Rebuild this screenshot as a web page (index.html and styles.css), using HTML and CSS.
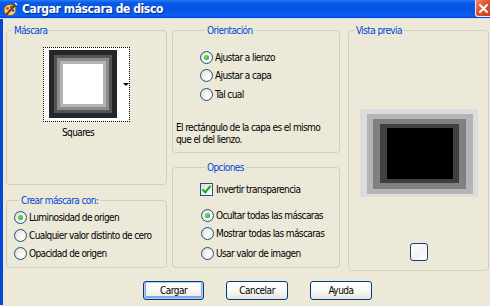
FILE: index.html
```html
<!DOCTYPE html>
<html lang="es">
<head>
  <meta charset="UTF-8" />
  <title>Cargar máscara de disco</title>
  <link rel="stylesheet" href="styles.css">
</head>
<body>
  <div class="window">
    <div class="titlebar">
      <svg class="app-icon" width="15" height="15" viewBox="0 0 15 15">
        <ellipse cx="7" cy="8" rx="6" ry="5.5" fill="#f4d38a" stroke="#9a5a1a" stroke-width="1"/>
        <circle cx="4.5" cy="6.5" r="1.4" fill="#e23b1c"/>
        <circle cx="8" cy="5" r="1.3" fill="#2a9a2a"/>
        <circle cx="10" cy="8.5" r="1.3" fill="#2050d0"/>
        <path d="M3 13 L13 2" stroke="#7a3a0a" stroke-width="2"/>
        <path d="M12 1 L14 3" stroke="#ffffff" stroke-width="1.5"/>
      </svg>
      <span class="title">Cargar máscara de disco</span>
      <span class="close">
        <svg width="11" height="11" viewBox="0 0 11 11">
          <path d="M2 2 L9 9 M9 2 L2 9" stroke="#fff" stroke-width="2" stroke-linecap="round"/>
        </svg>
      </span>
    </div>

    <div class="client">
      <div class="columns">
        <div class="col col-left">
          <fieldset class="group group-mask">
            <legend>Máscara</legend>
            <div class="swatch">
              <div class="mask-thumb"></div>
              <span class="drop-arrow"></span>
            </div>
            <div class="swatch-name">Squares</div>
          </fieldset>

          <fieldset class="group group-create">
            <legend>Crear máscara con:</legend>
            <label class="opt"><span class="radio checked"></span>Luminosidad de origen</label>
            <label class="opt"><span class="radio"></span>Cualquier valor distinto de cero</label>
            <label class="opt"><span class="radio"></span>Opacidad de origen</label>
          </fieldset>
        </div>

        <div class="col col-mid">
          <fieldset class="group group-orient">
            <legend>Orientación</legend>
            <div class="opt-list">
              <label class="opt"><span class="radio checked"></span>Ajustar a lienzo</label>
              <label class="opt"><span class="radio"></span>Ajustar a capa</label>
              <label class="opt"><span class="radio"></span>Tal cual</label>
            </div>
            <p class="note">El rectángulo de la capa es el mismo<br>que el del lienzo.</p>
          </fieldset>

          <fieldset class="group group-options">
            <legend>Opciones</legend>
            <label class="opt"><span class="check"></span>Invertir transparencia</label>
            <div class="opt-list spaced">
              <label class="opt"><span class="radio checked"></span>Ocultar todas las máscaras</label>
              <label class="opt"><span class="radio"></span>Mostrar todas las máscaras</label>
              <label class="opt last"><span class="radio"></span>Usar valor de imagen</label>
            </div>
          </fieldset>
        </div>

        <fieldset class="group group-preview">
          <legend>Vista previa</legend>
          <div class="pv pv1"><div class="pv pv2"><div class="pv pv3"><div class="pv pv4"><div class="pv pv5"></div></div></div></div></div>
          <button class="mini-btn" type="button"></button>
        </fieldset>
      </div>

      <div class="buttons">
        <button class="btn default" type="button">Cargar</button>
        <button class="btn" type="button">Cancelar</button>
        <button class="btn" type="button">Ayuda</button>
      </div>
    </div>
  </div>
</body>
</html>
```

FILE: styles.css
```css
/* Base */
* {
  box-sizing: border-box;
}
body {
  margin: 0;
  width: 490px;
  height: 306px;
  overflow: hidden;
  background: #ece9d8;
  font-family: 'DejaVu Sans Condensed', 'DejaVu Sans', sans-serif;
  font-size: 10px;
  letter-spacing: -0.6px;
  color: #000;
}

.window {
  width: 490px;
  height: 306px;
}

/* Title bar */
.titlebar {
  height: 19px;
  display: flex;
  align-items: flex-start;
  background: linear-gradient(#2a7cf6 0%, #0a5ae8 15%, #0454e6 55%, #0a60f0 85%, #0046d8 100%);
  border-bottom: 1px solid #cfd8f0;
}
.app-icon {
  margin: 2px 0 0 3px;
}
.title {
  margin: 2px 0 0 4px;
  color: #fff;
  font-weight: 700;
  font-size: 12px;
  line-height: 15px;
  letter-spacing: -0.4px;
  text-shadow: 1px 1px 0 #0a2a8a;
}
.close {
  margin-left: auto;
  width: 15px;
  height: 17px;
  display: flex;
  align-items: center;
  justify-content: center;
  padding-left: 1px;
  background: linear-gradient(135deg, #f08a6a 0%, #e0542c 45%, #c83c18 100%);
  border: 1px solid #f4e8e0;
  border-right: none;
  border-top: none;
  border-radius: 0 0 0 3px;
}

/* Client area */
.client {
  height: 286px;
  border-left: 3px solid #0846d8;
  padding: 5px 0 0 3px;
}

.columns {
  display: flex;
  align-items: flex-start;
}
.col {
  display: flex;
  flex-direction: column;
}
.col-left {
  width: 161px;
  gap: 9px;
}
.col-mid {
  width: 168px;
  margin-left: 5px;
  gap: 8px;
}

/* Group boxes */
.group {
  margin: 0;
  padding: 0;
  min-width: 0;
  border: 1px solid #d0d0bf;
  border-radius: 4px;
}
.group legend {
  margin-left: 5px;
  padding: 0 2px;
  line-height: 13px;
  color: #0046d5;
}

.group-mask {
  height: 161px;
  display: flex;
  flex-direction: column;
  padding-top: 10px;
}
.swatch {
  align-self: center;
  width: 87px;
  height: 75px;
  border: 1px dotted #000;
  background: #fff;
  display: flex;
  align-items: flex-start;
  padding: 2px 0 0 5px;
}
.mask-thumb {
  width: 68px;
  height: 68px;
  background: #fff;
  box-shadow:
    inset 0 0 0 5px #262626,
    inset 0 0 0 8px #545454,
    inset 0 0 0 11px #8c8c8c,
    inset 0 0 0 14px #b4b4b4;
}
.drop-arrow {
  margin: 33px 0 0 6px;
  border-left: 3px solid transparent;
  border-right: 3px solid transparent;
  border-top: 3px solid #000;
}
.swatch-name {
  margin: 4px 0 0 55px;
  line-height: 13px;
}

.group-create {
  height: 74px;
  padding: 1px 0 0 7px;
}

/* Options */
.opt {
  display: flex;
  align-items: center;
  height: 18px;
  gap: 2px;
  white-space: nowrap;
}
.radio {
  width: 13px;
  height: 13px;
  border-radius: 50%;
  border: 1px solid #1c5180;
  background: radial-gradient(circle at 65% 65%, #fff 0%, #f4f3ee 40%, #d8d7cc 100%);
  display: flex;
  align-items: center;
  justify-content: center;
  flex: none;
}
.radio.checked::after {
  content: '';
  width: 5px;
  height: 5px;
  border-radius: 50%;
  background: radial-gradient(circle at 40% 40%, #6bdc6b, #21a121);
}
.check {
  width: 13px;
  height: 13px;
  border: 1px solid #1c5180;
  background: linear-gradient(135deg, #dcdbd3, #fff);
  position: relative;
  flex: none;
  margin-right: 1px;
}
.check::after {
  content: '';
  position: absolute;
  left: 3px;
  top: 0;
  width: 3px;
  height: 7px;
  border-right: 2px solid #21a121;
  border-bottom: 2px solid #21a121;
  transform: rotate(40deg);
}

.group-orient {
  height: 129px;
  padding: 11px 0 0 27px;
}
.group-orient .opt {
  height: 18.5px;
}
.note {
  margin: 18px 0 0 -24px;
  line-height: 12px;
  white-space: nowrap;
}

.group-options {
  height: 107px;
  padding: 6px 0 0 27px;
}
.opt-list.spaced {
  margin: 8px 0 0 1px;
}
.opt.last {
  margin-top: 2px;
}

/* Preview */
.group-preview {
  width: 141px;
  height: 247px;
  margin-left: 8px;
  display: flex;
  flex-direction: column;
  align-items: center;
}
.pv1 {
  margin-top: 72px;
  background: #dcdcdc;
  padding: 5px 5px 3px 7px;
}
.pv2 {
  background: #b4b4b4;
  padding: 5px 7px 5px 6px;
}
.pv3 {
  background: #808080;
  padding: 5px 7px 6px 7px;
}
.pv4 {
  background: #404040;
  padding: 4px 6px 4px 7px;
}
.pv5 {
  width: 66px;
  height: 51px;
  background: #000;
}
.mini-btn {
  margin-top: 46px;
  width: 18px;
  height: 18px;
  padding: 0;
  border: 1px solid #1c3c7c;
  border-radius: 3px;
  background: linear-gradient(135deg, #fff 0%, #f2f2f2 50%, #fff 100%);
}

/* Dialog buttons */
.buttons {
  display: flex;
  gap: 22px;
  margin-top: 10px;
  padding-left: 137px;
}
.btn {
  width: 62px;
  height: 19px;
  padding: 0;
  font-family: 'DejaVu Sans Condensed', 'DejaVu Sans', sans-serif;
  font-size: 10px;
  letter-spacing: -0.5px;
  color: #000;
  border: 1px solid #003c74;
  border-radius: 3px;
  background: linear-gradient(#ffffff 0%, #f6f6f2 60%, #e6e3da 100%);
}
.btn.default {
  width: 61px;
  box-shadow: inset 0 0 0 1px #b6cdf5, inset 0 -1px 0 2px #86a8e8;
}
```
